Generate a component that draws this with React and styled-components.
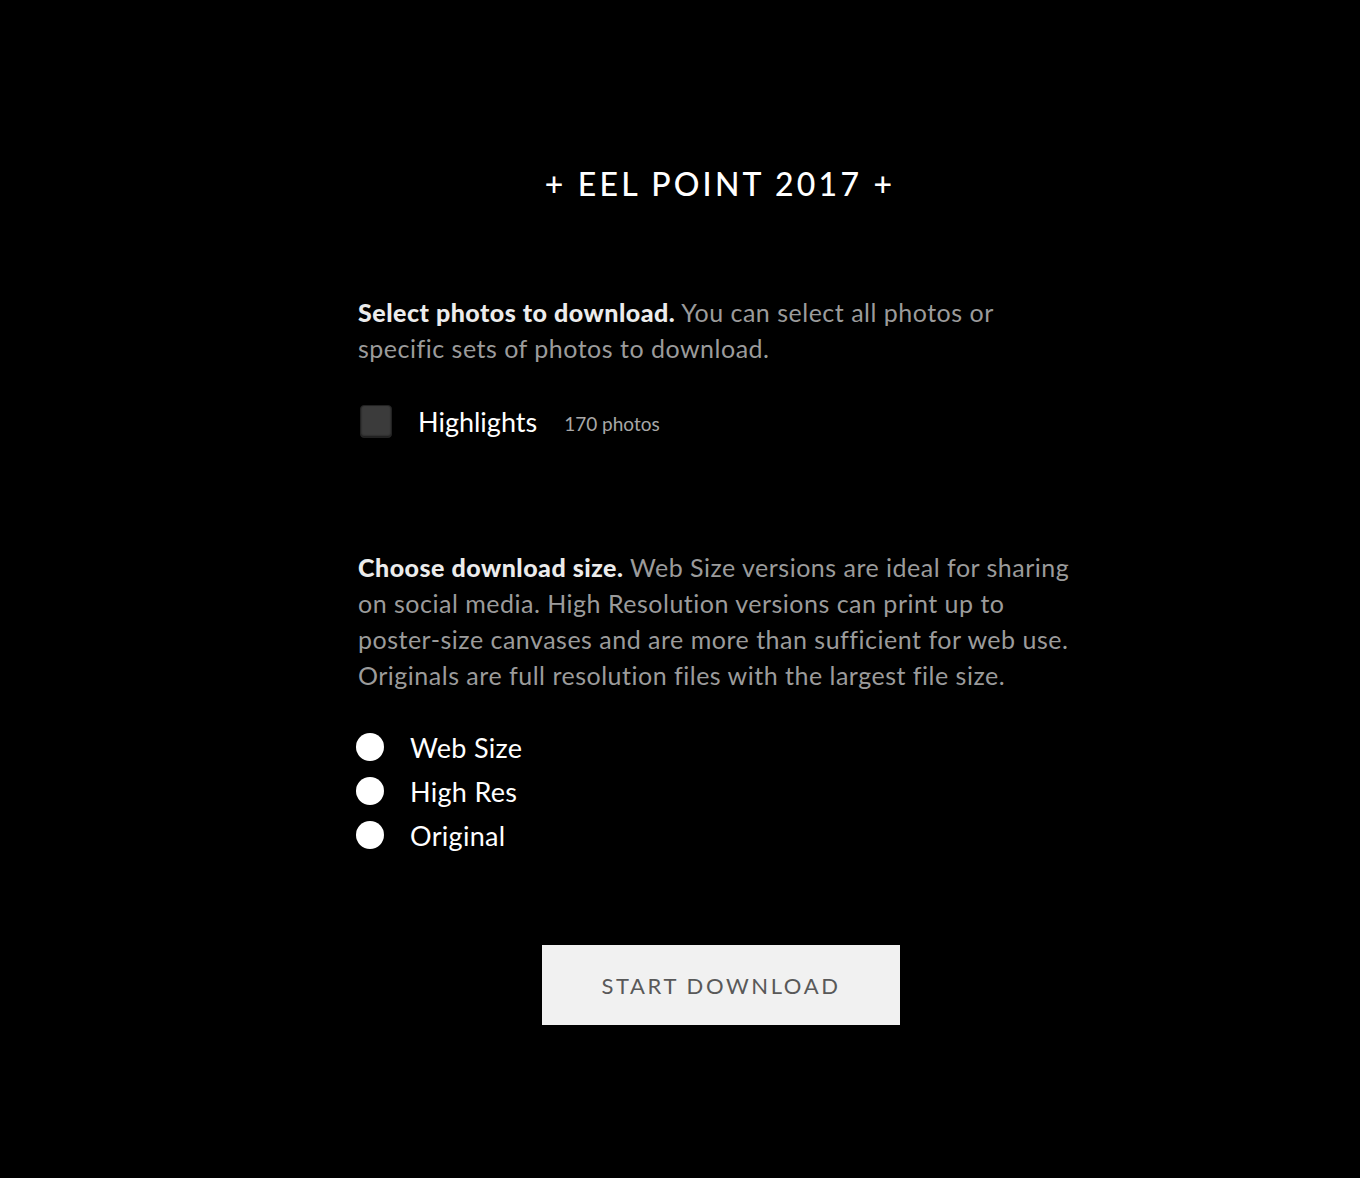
import styled, { createGlobalStyle } from "styled-components";
import { useState } from "react";

const Global = createGlobalStyle`
  html, body {
    margin: 0;
    padding: 0;
    background: #000;
  }
  body {
    font-family: "Lato", "Liberation Sans", sans-serif;
    -webkit-font-smoothing: antialiased;
  }
`;

const Page = styled.div`
  min-height: 1178px;
  background: #000;
  padding-top: 164px;
  box-sizing: border-box;
`;

const Column = styled.div`
  width: 724px;
  margin-left: 358px;
  display: flex;
  flex-direction: column;
`;

const Title = styled.h1`
  margin: 0;
  text-align: center;
  color: #fff;
  font-family: "Lato", sans-serif;
  font-weight: 500;
  font-size: 32px;
  line-height: 40px;
  letter-spacing: 3.2px;
`;

const Intro = styled.p`
  margin: ${(p) => p.top}px 0 0;
  color: #9b9b9b;
  font-size: 25px;
  line-height: 36px;
  letter-spacing: 0.5px;
  b {
    color: #ececec;
    font-weight: 900;
  }
`;

const SetRow = styled.label`
  display: flex;
  align-items: center;
  margin-top: 37px;
  height: 36px;
  cursor: pointer;
`;

const Box = styled.span`
  width: 30px;
  height: 31px;
  margin-left: 2px;
  border-radius: 4px;
  background: ${(p) => (p.on ? "#888" : "#3b3b3b")};
  border: 1px solid #222;
  box-shadow: inset 0 -1px 2px rgba(0, 0, 0, 0.6);
`;

const SetName = styled.span`
  margin-left: 26px;
  color: #fff;
  font-size: 27px;
`;

const SetCount = styled.span`
  margin-left: 27px;
  margin-top: 4px;
  color: #a8a8a8;
  font-size: 19px;
`;

const Options = styled.div`
  display: flex;
  flex-direction: column;
  gap: 8px;
  margin-top: 36px;
`;

const Option = styled.label`
  display: flex;
  align-items: center;
  height: 36px;
  cursor: pointer;
`;

const Dot = styled.span`
  width: 28px;
  height: 28px;
  margin-left: -2px;
  border-radius: 50%;
  background: #fff;
  box-sizing: border-box;
  box-shadow: ${(p) => (p.on ? "inset 0 0 0 8px #fff, inset 0 0 0 14px #555" : "none")};
`;

const OptionText = styled.span`
  margin-left: 26px;
  color: #fff;
  font-size: 27px;
  letter-spacing: 0.3px;
`;

const Button = styled.button`
  align-self: center;
  margin-top: 92px;
  margin-left: 2px;
  width: 358px;
  height: 80px;
  border: none;
  background: #f1f1f1;
  color: #595959;
  font-family: "Lato", sans-serif;
  font-size: 22px;
  letter-spacing: 2.6px;
  cursor: pointer;
`;

const sizes = ["Web Size", "High Res", "Original"];

export default function App() {
  const [picked, setPicked] = useState(false);
  const [size, setSize] = useState(null);

  return (
    <>
      <Global />
      <Page>
        <Column>
          <Title>+ EEL POINT 2017 +</Title>
          <Intro top={90}>
            <b>Select photos to download.</b> You can select all photos or
            specific sets of photos to download.
          </Intro>
          <SetRow onClick={() => setPicked(!picked)}>
            <Box on={picked} />
            <SetName>Highlights</SetName>
            <SetCount>170 photos</SetCount>
          </SetRow>
          <Intro top={110}>
            <b>Choose download size.</b> Web Size versions are ideal for sharing
            on social media. High Resolution versions can print up to
            poster-size canvases and are more than sufficient for web use.
            Originals are full resolution files with the largest file size.
          </Intro>
          <Options>
            {sizes.map((s) => (
              <Option key={s} onClick={() => setSize(s)}>
                <Dot on={size === s} />
                <OptionText>{s}</OptionText>
              </Option>
            ))}
          </Options>
          <Button>START DOWNLOAD</Button>
        </Column>
      </Page>
    </>
  );
}
